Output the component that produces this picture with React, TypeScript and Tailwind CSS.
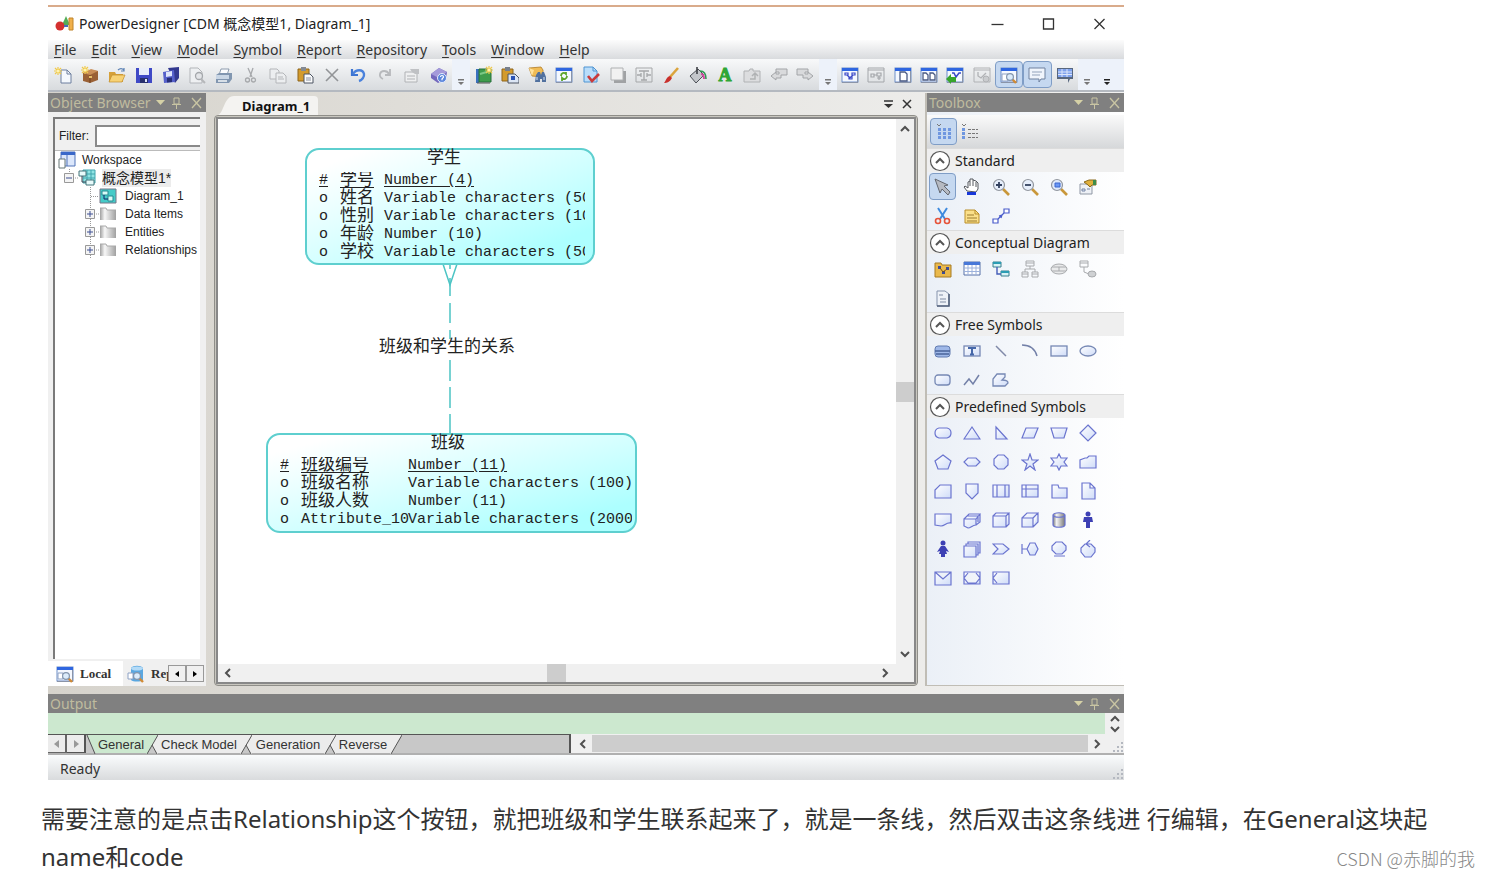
import React from 'react';

interface Tool {
    name: string;
    icon: React.ReactNode;
    active?: boolean;
}

interface Attribute {
    key?: boolean;
    name: string;
    type: string;
}

const uiFont = "font-['Noto_Sans','Noto_Sans_CJK_SC',sans-serif]";
const arial = "font-['Liberation_Sans','Noto_Sans_CJK_SC',sans-serif]";
const mono = "font-['Liberation_Mono','Noto_Sans_CJK_SC',monospace]";

const Icon: React.FC<{ children: React.ReactNode }> = ({ children }) => (
    <svg viewBox="0 0 18 18" className="h-[18px] w-[18px] shrink-0" fill="none" aria-hidden="true">
        {children}
    </svg>
);

// Pieces reused by several icons
const Spark = ({ x = 3, y = 4 }: { x?: number; y?: number }) => (
    <g transform={`translate(${x} ${y})`}>
        <path d="M0-4V4M-4 0H4M-3-3L3 3M3-3L-3 3" stroke="#f0c94a" strokeWidth="1.2" />
        <circle r="1.6" fill="#fff3b0" />
    </g>
);

const Lens = ({ x = 10, y = 10 }: { x?: number; y?: number }) => (
    <g>
        <path d={`M${x + 2} ${y + 2}l4 4`} stroke="#d18a34" strokeWidth="2.4" />
        <circle cx={x} cy={y} r="3.4" fill="#dcecfb" stroke="#8395ad" strokeWidth="1.2" />
    </g>
);

const BlueWindow = () => (
    <g>
        <rect x="1" y="2" width="16" height="14" fill="#f4f8ff" stroke="#6f8fc8" />
        <path d="M1 2h16v3H1z" fill="#2f66e0" />
        <path d="M1 16.5h16M16.5 5v11" stroke="#8a94a8" />
    </g>
);

const fileTools: Tool[] = [
    { name: 'New', icon: <><path d="M7 4h6l4 4v9H7z" fill="#f4f8fd" stroke="#6c7f9e" /><path d="M13 4v4h4" stroke="#6c7f9e" /><Spark x={4} y={5} /></> },
    { name: 'New project', icon: <><path d="M2 7l7-3 8 1v9l-8 3-7-2z" fill="#9a6136" /><path d="M2 7l7 2 8-4-7-2z" fill="#c98e59" /><path d="M9 9v8" stroke="#70401f" /><path d="M8 10h3v2H8z" fill="#e8c06a" /><Spark x={4} y={4} /></> },
    { name: 'Open', icon: <><path d="M1 6h6l1 2h7v8H1z" fill="#d6a13a" /><path d="M4 9h13l-3 7H1z" fill="#f7d275" stroke="#c08c2c" strokeWidth=".7" /><path d="M10 4c2-2 4-2 6 0m0-2v3h-3" stroke="#5c82b5" strokeWidth="1.2" /></> },
    { name: 'Save', icon: <><path d="M1 2h16v15H1z" fill="#3f49c6" /><path d="M4 2h10v7H4z" fill="#e9eefb" /><path d="M5 12h8v5H5z" fill="#28306e" /><path d="M10 13h2v3h-2z" fill="#dfe4f7" /></> },
    { name: 'Save all', icon: <><path d="M6 2l11-1v11l-4 5z" fill="#33398f" /><path d="M1 6l11-2 1 12-11 1z" fill="#5560ca" /><path d="M4 6l6-1v5l-6 1z" fill="#dfe5fa" /><path d="M5 12l5-.5V16l-5 .5z" fill="#282f78" /></> },
    { name: 'Print preview', icon: <><path d="M2 2h8l4 4v11H2z" fill="#eef0f2" stroke="#b2b5b9" /><circle cx="11" cy="10" r="3.5" fill="#e3e5e8" stroke="#a4a7ab" strokeWidth="1.3" /><path d="M13 13l4 4" stroke="#b5b7ba" strokeWidth="2" /></> },
    { name: 'Print', icon: <><path d="M6 3h8l-2 6H4z" fill="#fbfcfe" stroke="#73869c" strokeWidth=".8" /><path d="M1 9l3-2h13v6l-3 4H1z" fill="#8196b0" /><path d="M1 9h13v4H1z" fill="#c9d6e5" /><path d="M3 15h9" stroke="#f4f7fa" strokeWidth="1.5" /></> },
    { name: 'Cut', icon: <g stroke="#a7a9ac" strokeWidth="1.3"><path d="M6 2l4 9M11 2L8 11" /><circle cx="5.5" cy="14" r="2" /><circle cx="11.5" cy="14" r="2" /></g> },
    { name: 'Copy', icon: <g fill="#eceef0" stroke="#b4b6b9"><path d="M1 3h7l2 2v8H1z" /><path d="M7 7h7l3 3v7H7z" /><path d="M9 11h5M9 13h6" /></g> },
    { name: 'Paste', icon: <><path d="M2 3h11v12H2z" fill="#d39b2c" stroke="#8e651b" /><path d="M5 1h5v4H5z" fill="#848a93" /><path d="M8 8h6l3 3v6H8z" fill="#fbfbfb" stroke="#4d5563" /><path d="M10 12h5M10 14h5" stroke="#8a93a3" /></> },
    { name: 'Delete', icon: <path d="M3 3l12 12M15 3L3 15" stroke="#929497" strokeWidth="1.6" /> },
    { name: 'Undo', icon: <><path d="M3 3v6h6" stroke="#3c74d2" strokeWidth="2.2" /><path d="M4 8c3-5 10-5 11 0 .5 3-2 6-5 7" stroke="#4a82dc" strokeWidth="2.4" /></> },
    { name: 'Redo', icon: <g stroke="#b7b9bc" strokeWidth="1.8"><path d="M14 3v6H9" /><path d="M13 8c-2-4-8-4-9 0-.5 2 1 4 3 5" /></g> },
    { name: 'Properties', icon: <><path d="M2 6h12v10H2z" fill="#eeeff0" stroke="#b0b2b5" /><path d="M7 3h9v5h-4L9 6z" fill="#bfc1c4" /><path d="M4 10h8M4 13h8" stroke="#b0b2b5" /></> },
    { name: 'Help topics', icon: <><path d="M1 8l8-6 8 4-1 7-8 4-7-5z" fill="#7468bd" /><path d="M1 8l8-6 8 4-8 6z" fill="#a49ada" /><circle cx="12" cy="12" r="4.5" fill="#5b86dc" stroke="#e7edfb" /><path d="M10.5 11c0-2 3-2 3 0 0 1-1.5 1-1.5 2.2v1" stroke="#fff" strokeWidth="1.2" /></> },
];

const viewTools: Tool[] = [
    { name: 'New diagram', icon: <><path d="M1 3h3v14H1z" fill="#3b70bd" /><path d="M4 3h12v13H4z" fill="#3f9c4c" stroke="#27713a" /><path d="M2 17h13" stroke="#555" /><path d="M5 8l10-3" stroke="#7cc886" strokeWidth="2" /><Spark x={14} y={4} /></> },
    { name: 'Paste as shortcut', icon: <><path d="M1 3h11v12H1z" fill="#d39b2c" stroke="#8e651b" /><path d="M4 1h5v4H4z" fill="#777f8b" /><path d="M7 8h7l4 4v5H7z" fill="#dce6f5" stroke="#4d5563" /><path d="M10 10h4v4h-4z" fill="#2b54b5" /></> },
    { name: 'Find', icon: <><path d="M1 2l12-1 2 3v7L4 10z" fill="#f0bc56" stroke="#b17b24" strokeWidth=".8" /><path d="M1 2l3 8 2-6z" fill="#ffe19a" /><path d="M8 9l2-3h2l1 3 1-3h2l2 5v5h-4v-3h-2v3H7z" fill="#51719f" /><path d="M9 14v-3M16 14v-3" stroke="#dae6f6" /></> },
    { name: 'Refresh', icon: <><BlueWindow /><path d="M6 10c0-3 3-4 5-2V6M12 10c0 3-3 4-5 2v3" stroke="#5da52c" strokeWidth="1.8" /></> },
    { name: 'Check model', icon: <><path d="M2 1h9l4 4v11H2z" fill="#b9ddfa" stroke="#4f94d2" /><path d="M11 1v4h4" stroke="#4f94d2" /><path d="M6 10l4 5 7-7" stroke="#c93b3b" strokeWidth="2.6" /></> },
    { name: 'Shadow', icon: <><path d="M5 5h12v12H5z" fill="#a0a2a4" /><path d="M2 2h12v12H2z" fill="#f1f1f1" stroke="#aeb0b2" /></> },
    { name: 'Text zone', icon: <g stroke="#a5a7a9"><path d="M1 2h16v14H1z" /><path d="M4 5h10M9 5v9M6 14h6M2 9h4M12 9h4M6 7v4M12 7v4" strokeWidth="1.3" /></g> },
    { name: 'Line style', icon: <><path d="M16 2l-8 9" stroke="#dba43c" strokeWidth="2.6" /><path d="M8 10l2 2c-2 4-5 5-8 5 2-2 2-6 6-7z" fill="#c9302c" /></> },
    { name: 'Fill', icon: <><path d="M1 10l8-7 6 6-8 8z" fill="#c3c6ca" stroke="#4b4f55" /><path d="M8 1v7" stroke="#3c3f44" strokeWidth="1.6" /><path d="M11 5c4 0 6 3 6 8" stroke="#2f9a54" strokeWidth="1.6" /><path d="M12 8c2 0 3 2 3 5" stroke="#d14ba0" strokeWidth="2" /></> },
    { name: 'Font', icon: <text x="9" y="15" textAnchor="middle" fill="#2fa634" stroke="#2fa634" fontSize="18" fontWeight="700" fontFamily="Liberation Serif">A</text> },
    { name: 'Go up', icon: <g fill="#dcdddf" stroke="#b0b2b4"><path d="M1 5h5l1-2h3v2h7v11H1z" /><path d="M7 13h5V8m-3 2l3-3 3 3" strokeWidth="1.5" /></g> },
    { name: 'Previous view', icon: <path d="M6 6h11v6h-6v3l-1 0-4 0v2l-5-4 5-4v2h3V9H6z" transform="translate(0 -3)" fill="#d9dadc" stroke="#a3a5a8" /> },
    { name: 'Next view', icon: <path d="M12 6H1v6h6v3h5v2l5-4-5-4v2H9V9h3z" transform="translate(0 -3)" fill="#d9dadc" stroke="#a3a5a8" /> },
];

const windowTools: Tool[] = [
    { name: 'Diagram window', icon: <><BlueWindow /><path d="M4 7h3v2H4zM11 7h3v2h-3zM8 11h3v2H8zM6 9l3 3 3-3" stroke="#3a49c8" strokeWidth="1.2" /></> },
    { name: 'Grid window', icon: <g stroke="#a3a6aa"><path d="M1 2h16v14H1zM1 4h16" /><path d="M4 8h3v3H4zM10 7h4v3h-4zM10 12h4M7 9h3M12 10v4" strokeWidth="1.2" /></g> },
    { name: 'Page window', icon: <><BlueWindow /><path d="M6 6h5l2 2v7H6z" fill="#fff" stroke="#4a5a83" strokeWidth="1.3" /></> },
    { name: 'Pages window', icon: <><BlueWindow /><path d="M3 7h3l2 2v5H3zM10 7h3l2 2v5h-5z" fill="#fff" stroke="#4a5a83" strokeWidth="1.3" /></> },
    { name: 'Show symbols', icon: <><BlueWindow /><path d="M6 7h2l2 4 3-4h2" stroke="#3a49c8" strokeWidth="1.5" /><path d="M0 13l5-5v3h5v5H5v2z" fill="#37a52c" /></> },
    { name: 'Hide symbols', icon: <g stroke="#b0b2b5"><path d="M1 2h16v14H1zM1 4h16" /><path d="M5 6v4l3 2 5-5" strokeWidth="1.3" /><circle cx="13" cy="13" r="3" fill="#cacccf" /></g> },
    { name: 'Object Browser', active: true, icon: <><BlueWindow /><path d="M2 8h6v7H2z" fill="#fff" stroke="#8ea2c5" /><Lens x={10} y={11} /></> },
    { name: 'Output', active: true, icon: <><path d="M1 2h16v11h-4l-2 3v-3H1z" fill="#f0f5fc" stroke="#6f819f" /><path d="M4 6h10M4 9h8" stroke="#93a3bb" /></> },
    { name: 'Result list', icon: <><path d="M1 2h16v11h-3l-2 4v-4H1z" fill="#58677e" /><path d="M2 3h14v8H2z" fill="#7ea1ec" /><path d="M2 6h14M2 8.5h14M6 3v8M11 3v8" stroke="#dce6fb" /></> },
];

const standardTools: Tool[] = [
    { name: 'Pointer', active: true, icon: <path d="M1 1l13 6-4 1 6 6-2 3-6-6-2 4z" fill="#b6bac2" stroke="#63676f" /> },
    { name: 'Grabber', icon: <><path d="M4 13L1 9l1-1 3 2V4l2-1V1h3v1l3 1 2 2v6l-2 3z" fill="#fff" stroke="#55585e" /><path d="M7 3v5M10 2v6M13 4v5" stroke="#55585e" /><path d="M4 14h9v3H4z" fill="#1737d8" /></> },
    { name: 'Zoom in', icon: <><path d="M11 11l6 6" stroke="#c9973a" strokeWidth="2.6" /><circle cx="7" cy="7" r="5.5" fill="#e6eefb" stroke="#92979f" strokeWidth="1.2" /><path d="M4 7h6M7 4v6" stroke="#33415f" strokeWidth="1.8" /></> },
    { name: 'Zoom out', icon: <><path d="M11 11l6 6" stroke="#c9973a" strokeWidth="2.6" /><circle cx="7" cy="7" r="5.5" fill="#e6eefb" stroke="#92979f" strokeWidth="1.2" /><path d="M4 7h6" stroke="#33415f" strokeWidth="1.8" /></> },
    { name: 'Open diagram', icon: <><path d="M11 11l6 6" stroke="#c9973a" strokeWidth="2.6" /><circle cx="7" cy="7" r="5.5" fill="#dfe9fb" stroke="#92979f" strokeWidth="1.2" /><path d="M5 5h5v4H5z" fill="#6b97f4" stroke="#3b66ce" /></> },
    { name: 'Properties', icon: <><path d="M1 6h12v10H1z" fill="#eef1f6" stroke="#8f97a4" /><path d="M3 11h3v2H3zM8 11h3" stroke="#7284a6" /><path d="M5 4l5-2h7v5h-4l-2 2-2-2z" fill="#e0b03c" stroke="#8a6a1e" /><path d="M14 2h3v5h-3z" fill="#3e8c4a" /></> },
    { name: 'Delete', icon: <><path d="M4 1l7 11M13 1L6 12" stroke="#3f8ade" strokeWidth="2" /><circle cx="4" cy="14" r="2.5" stroke="#e6533a" strokeWidth="1.6" /><circle cx="13" cy="14" r="2.5" stroke="#e6533a" strokeWidth="1.6" /></> },
    { name: 'Note', icon: <><path d="M2 3h10l4 4v9H2z" fill="#fbe08a" stroke="#b98e2b" /><path d="M12 3v4h4" stroke="#b98e2b" /><path d="M4 8h7M4 11h10M4 14h10" stroke="#9c7d31" /></> },
    { name: 'Link', icon: <g stroke="#4a5ccb" strokeWidth="1.2"><path d="M1 12h5v4H1zM12 2h5v4h-5z" fill="#fff" /><path d="M6 12l6-6M7 9l3-1-1 3" /></g> },
];

const conceptualTools: Tool[] = [
    { name: 'Package', icon: <><path d="M1 3h6l1 2h9v12H1z" fill="#eab94c" stroke="#a77a22" /><path d="M4 6h3v3H4zM12 7h3v3h-3zM8 11h3v3H8z" fill="#3c4c9c" /><path d="M6 8l3 4 4-3" stroke="#7b5413" /></> },
    { name: 'Entity', icon: <><path d="M1 2h16v13H1z" fill="#fff" stroke="#5671a8" /><path d="M1 2h16v3H1z" fill="#4878d8" /><path d="M1 8h16M1 11.5h16M5 5v10M9 5v10M13 5v10" stroke="#9db2dc" /></> },
    { name: 'Relationship', icon: <><path d="M1 2h8v5H1zM9 11h8v5H9z" fill="#d8f3f6" stroke="#397e8e" /><path d="M1 2h8v2H1zM9 11h8v2H9z" fill="#2b9db4" /><path d="M5 7v7h4" stroke="#445db8" strokeWidth="1.4" /></> },
    { name: 'Inheritance', icon: <g stroke="#a8aaad"><path d="M5 1h8v5H5zM1 12h6v5H1zM11 12h6v5h-6zM9 6v3M4 12V9h10v3" /><path d="M5 3h8M1 14h6M11 14h6" /></g> },
    { name: 'Association', icon: <g stroke="#a8aaad"><ellipse cx="9" cy="9" rx="8" ry="5" fill="#e9eaeb" /><path d="M2 7h14M2 11h14M9 7v4" /></g> },
    { name: 'Association link', icon: <g stroke="#a8aaad"><path d="M1 1h8v6H1zM1 3h8M5 7v5l5 2" /><ellipse cx="13" cy="14" rx="4" ry="3" fill="#cfd1d3" /></g> },
    { name: 'File', icon: <><path d="M3 2h8l4 3v12H3z" fill="#eef2f8" stroke="#8593ac" /><path d="M15 5v12H3" stroke="#54637d" strokeWidth="1.6" /><path d="M5 6h4M6 10h6M6 13h6" stroke="#7e8ba3" /></> },
];

const slate = { stroke: '#7688b4', strokeWidth: 1.3, fill: 'url(#shapeFill)' };
const violet = { stroke: '#6a74cf', strokeWidth: 1.2, fill: 'url(#shapeFill)' };

const freeTools: Tool[] = [
    { name: 'Title', icon: <><rect x="1" y="4" width="15" height="11" rx="3" fill="#9fb8e8" stroke="#617bb0" /><path d="M1 9h15M2 12h13" stroke="#4a6399" strokeWidth="1.3" /></> },
    { name: 'Text', icon: <><rect x="1" y="4" width="16" height="10" {...slate} /><path d="M5 6h8M9 6v7M7 12.5h4" stroke="#4567a9" strokeWidth="2" /></> },
    { name: 'Line', icon: <path d="M4 4l10 10" stroke="#8089a8" strokeWidth="1.5" /> },
    { name: 'Arc', icon: <path d="M1 3c8 0 13 4 15 11" stroke="#7380a8" strokeWidth="1.5" /> },
    { name: 'Rectangle', icon: <rect x="1" y="4" width="16" height="10" {...slate} /> },
    { name: 'Ellipse', icon: <ellipse cx="9" cy="9" rx="8" ry="5" {...slate} /> },
    { name: 'Rounded rectangle', icon: <rect x="1" y="4" width="15" height="10" rx="3" {...slate} /> },
    { name: 'Polyline', icon: <path d="M1 14l5-6 4 5 6-9" stroke="#7380a8" strokeWidth="1.5" /> },
    { name: 'Polygon', icon: <path d="M1 15V8l4-5h8v3l-3 3c3 0 6 1 6 3l-3 3z" {...slate} /> },
];

const shapePaths: [string, string][] = [
    ['Rounded', 'M5 4h8q4 1 4 5t-4 5H5q-4-1-4-5t4-5z'],
    ['Triangle', 'M9 3l8 12H1z'],
    ['Right triangle', 'M4 3l11 12H4z'],
    ['Parallelogram', 'M5 4h12l-4 10H1z'],
    ['Trapezoid', 'M1 4h16l-3 10H4z'],
    ['Diamond', 'M9 1l8 8-8 8-8-8z'],
    ['Pentagon', 'M9 2l8 6-3 8H4L1 8z'],
    ['Hexagon', 'M5 5h8l4 4-4 4H5L1 9z'],
    ['Octagon', 'M6 2h6l4 4v6l-4 4H6l-4-4V6z'],
    ['Five point star', 'M9 1l2 6h6l-5 4 2 6-5-4-5 4 2-6-5-4h6z'],
    ['Six point star', 'M9 1l2 4h6l-3 4 3 4h-6l-2 4-2-4H1l3-4-3-4h6z'],
    ['Manual input', 'M1 15V7l5-2h2l2-2h7v12z'],
    ['Card', 'M1 16V8l5-5h11v13z'],
    ['Off page', 'M3 2h12v9l-6 6-6-6z'],
    ['Predefined process', 'M1 3h16v12H1zM5 3v12M13 3v12'],
    ['Internal storage', 'M1 3h16v12H1zM5 3v12M1 7h16'],
    ['Folder', 'M2 6V3h6l1 3h8v10H2z'],
    ['Page', 'M3 1h8l5 5v11H3zM11 1v5h5'],
    ['Document', 'M1 3h16v9c-5-1-6 3-10 3l-6-1z'],
    ['Documents', 'M1 8h12v6c-4 0-5 3-8 3l-4-2zM1 8l5-5h11l-4 5M17 3v8l-4 3M4 5h11v6'],
    ['Box', 'M1 5h13v11H1zM1 5l3-3h13l-3 3M17 2v11l-3 3'],
    ['Cube', 'M1 7h11v9H1zM1 7l5-5h11l-5 5M17 2v9l-5 5'],
    ['Cylinder', 'M3 4v10c1 3 11 3 12 0V4c-1-3-11-3-12 0zM3 4c1 3 11 3 12 0'],
    ['Man', 'M5 6h8l1 5h-3v6H7v-6H4z'],
    ['Woman', 'M7 6h4l4 6-3-1 1 3h-2v3H7v-3H5l1-3-3 1z'],
    ['Stack', 'M1 6h12v11H1zM3 6V4h12v11h-2M5 4V2h12v11h-2'],
    ['Chevron', 'M1 4h10l6 5-6 5H1l5-5z'],
    ['Boundary', 'M1 4v10M1 9h5M6 9l3-6h5l3 6-3 6H9z'],
    ['Entity circle', 'M6 2h6l4 4v4l-4 4H6l-4-4V6zM4 16h11'],
    ['Control', 'M6 4h6l4 4v4l-4 5H6l-4-5V8zM11 0L7 4l4 3'],
    ['Envelope', 'M1 3h16v13H1zM1 3l8 7 8-7'],
    ['Frame', 'M1 3h16v12H1zM5 4l-4 5 4 5h8l4-5-4-5'],
    ['Cut card', 'M1 3h16v12H1zM5 4L1 9l4 5'],
];

const solidShapes = ['Man', 'Woman'];

const shapeTools: Tool[] = shapePaths.map(([name, d]) => ({
    name,
    icon: solidShapes.includes(name) ? (
        <g fill="#3d40b4"><circle cx="9" cy="3" r="2.5" /><path d={d} /></g>
    ) : (
        <path d={d} {...violet} fill={name === 'Cylinder' ? 'url(#metalFill)' : violet.fill} />
    ),
}));

const toolboxSections = [
    { title: 'Standard', tools: standardTools },
    { title: 'Conceptual Diagram', tools: conceptualTools },
    { title: 'Free Symbols', tools: freeTools },
    { title: 'Predefined Symbols', tools: shapeTools },
];

const menus = ['File', 'Edit', 'View', 'Model', 'Symbol', 'Report', 'Repository', 'Tools', 'Window', 'Help'];

const ToolButton: React.FC<{ tool: Tool; className?: string }> = ({ tool, className = '' }) => (
    <button
        type="button"
        aria-label={tool.name}
        className={`flex items-center justify-center rounded-sm ${tool.active ? 'border border-[#7f9dc6] bg-[#c5d8f0]' : ''} ${className}`}
    >
        <Icon>{tool.icon}</Icon>
    </button>
);

const Overflow = ({ dark = false }: { dark?: boolean }) => (
    <button type="button" aria-label="Toolbar options" className="flex w-[18px] shrink-0 items-end justify-center bg-[#edf2fa] pb-1">
        <svg viewBox="0 0 6 7" className="h-[7px] w-[6px]" fill={dark ? '#222' : '#777'}>
            <path d="M0 0h6v1.500H0zM0 3h6L3 6z" />
        </svg>
    </button>
);

const Chevron: React.FC<{ dir: 'up' | 'down' | 'left' | 'right' }> = ({ dir }) => {
    const paths = { up: 'M1 7l4-4 4 4', down: 'M1 3l4 4 4-4', left: 'M7 1L3 5l4 4', right: 'M3 1l4 4-4 4' };
    return (
        <svg viewBox="0 0 10 10" className="h-[10px] w-[10px]" fill="none" stroke="#505050" strokeWidth="2">
            <path d={paths[dir]} />
        </svg>
    );
};

const PanelHeader: React.FC<{ title: string }> = ({ title }) => (
    <div className="flex h-[19px] items-center bg-[#808080] px-[2px] text-[14px] leading-[19px] text-[#bfbb9e]">
        <span className="grow whitespace-nowrap">{title}</span>
        <svg viewBox="0 0 50 12" className="h-3 w-[50px] shrink-0" fill="none" stroke="#c9c5a3">
            <path d="M2 3h9L6.500 8z" fill="#d5d1a6" stroke="none" />
            <path d="M20 1h5v6h-5zM18 7.500h9M22.500 8v4" />
            <path d="M38 1l9 10M47 1l-9 10" strokeWidth="1.3" />
        </svg>
    </div>
);

const AppLogo = () => (
    <svg viewBox="0 0 20 18" className="h-[18px] w-5" aria-hidden="true">
        <defs>
            <linearGradient id="shapeFill" x1="0" y1="0" x2="1" y2="1">
                <stop offset="0" stopColor="#fff" />
                <stop offset="1" stopColor="#cfdcf8" />
            </linearGradient>
            <linearGradient id="metalFill">
                <stop offset="0" stopColor="#777" />
                <stop offset=".3" stopColor="#f4f4f4" />
                <stop offset="1" stopColor="#777" />
            </linearGradient>
        </defs>
        <path d="M11 1l4 9H7z" fill="#54ad58" />
        <path d="M14 3h4v12h-4z" fill="#f0b04b" stroke="#c0842b" />
        <circle cx="5" cy="11" r="4.5" fill="#d4302f" />
        <path d="M9 11h4" stroke="#4869b8" strokeWidth="2" />
    </svg>
);

const Expander = ({ open = false }: { open?: boolean }) => (
    <svg viewBox="0 0 18 18" className="h-[18px] w-[18px] shrink-0" fill="none">
        <path d="M13 9h5" stroke="#999" strokeDasharray="1 1" />
        <path d={open ? 'M9.500 0v4' : 'M9.500 0v4M9.500 14v4'} stroke="#999" strokeDasharray="1 1" />
        <path d="M4.500 4.500h9v9h-9z" fill="#f4f4f4" stroke="#999" />
        <path d={open ? 'M6 9h6' : 'M6 9h6M9 6v6'} stroke="#3c4f92" />
    </svg>
);

const FolderIcon = () => (
    <Icon>
        <path d="M1 3h6l1 2h9v10H1z" fill="url(#metalFill)" opacity=".7" />
        <path d="M1 3h6l1 2h9" stroke="#aaa" />
    </Icon>
);

const ObjectBrowser = () => (
    <section className="flex w-[158px] shrink-0 flex-col bg-[#f0f0f0]">
        <PanelHeader title="Object Browser" />
        <div className={`mt-[5px] mr-[6px] ml-[5px] flex grow flex-col border-t-2 border-l-2 border-[#7a7a7a] bg-white ${arial} text-[12px] text-[#222]`}>
            <div className="flex h-8 items-center gap-[6px] border-b border-[#bbb] bg-[#f0f0f0] pt-[3px] pl-1">
                <label htmlFor="filter">Filter:</label>
                <input id="filter" type="text" className="h-[22px] w-0 grow border-2 border-r-0 border-[#8a8a8a] bg-white outline-none" />
            </div>
            <ul className="leading-[18px] whitespace-nowrap">
                <li className="flex gap-[6px] pl-[3px]">
                    <Icon>
                        <path d="M3 1h14v14H3z" fill="#dce7fb" stroke="#5374b8" />
                        <path d="M3 1h14v3H3z" fill="#3a68c9" />
                        <path d="M9 4v11" stroke="#5374b8" />
                        <path d="M1 8h6v9H1z" fill="#fff" stroke="#677" />
                    </Icon>
                    Workspace
                </li>
                <li className="flex pl-[5px]">
                    <Expander open />
                    <Icon>
                        <path d="M5 1h12v13H5z" fill="#8fe3e3" stroke="#41a5ad" />
                        <path d="M9 1v13M13 1v13M5 5h12M5 9h12" stroke="#41a5ad" />
                        <path d="M1 2h7v5H1zM8 11h8v5H8z" fill="#e8fbfb" stroke="#44747a" />
                        <path d="M4 7v6h4" stroke="#445" />
                    </Icon>
                    <span className="ml-[6px] bg-[#ececec] text-[14px]">概念模型1*</span>
                </li>
                <li className="flex pl-[26px]">
                    <svg viewBox="0 0 18 18" className="h-[18px] w-[18px]"><path d="M9.500 0v18M10 9.500h8" stroke="#999" strokeDasharray="1 1" /></svg>
                    <Icon>
                        <path d="M1 2h16v14H1z" fill="#45cbc8" stroke="#778" />
                        <path d="M3 4h6v4H3zM9 9h5v5H9z" fill="#d9fbf7" stroke="#278a91" />
                        <path d="M5 8v4h4" stroke="#126" />
                    </Icon>
                    <span className="ml-[8px]">Diagram_1</span>
                </li>
                {['Data Items', 'Entities', 'Relationships'].map((item) => (
                    <li key={item} className="flex pl-[26px]">
                        <Expander />
                        <FolderIcon />
                        <span className="ml-[8px]">{item}</span>
                    </li>
                ))}
            </ul>
        </div>
        <div className="mt-[2px] flex h-[25px] items-stretch font-['Liberation_Serif',serif] text-[13px] font-bold text-[#333]">
            <button type="button" className="flex w-[75px] items-center gap-[6px] bg-white pl-2">
                <Icon><BlueWindow /><path d="M2 8h5v6H2z" fill="#fff" stroke="#8ea2c5" /><Lens x={10} y={11} /></Icon>
                Local
            </button>
            <button type="button" className="flex w-0 grow items-center gap-[6px] overflow-hidden pl-1">
                <Icon><path d="M4 3v12c2 2 10 2 12 0V3c-2-3-10-3-12 0z" fill="#5aa7e0" /><ellipse cx="10" cy="3.5" rx="6" ry="2" fill="#b4dbf7" /><path d="M1 8h5v6H1z" fill="#fff" stroke="#8ea2c5" /><Lens x={10} y={11} /></Icon>
                Rep
            </button>
            <div className="my-1 mr-[2px] flex w-9 text-[#111]">
                <button type="button" aria-label="Scroll tabs left" className="flex w-[18px] items-center justify-center border border-[#999] bg-[#f0f0f0]">
                    <svg viewBox="0 0 6 6" className="h-[6px] w-[6px]"><path d="M5 0v6L1 3z" /></svg>
                </button>
                <button type="button" aria-label="Scroll tabs right" className="flex w-[18px] items-center justify-center border border-[#999] bg-[#f0f0f0]">
                    <svg viewBox="0 0 6 6" className="h-[6px] w-[6px]"><path d="M1 0v6l4-3z" /></svg>
                </button>
            </div>
        </div>
    </section>
);

const studentAttributes: Attribute[] = [
    { key: true, name: '学号', type: 'Number (4)' },
    { name: '姓名', type: 'Variable characters (50)' },
    { name: '性别', type: 'Variable characters (10)' },
    { name: '年龄', type: 'Number (10)' },
    { name: '学校', type: 'Variable characters (50)' },
];

const classAttributes: Attribute[] = [
    { key: true, name: '班级编号', type: 'Number (11)' },
    { name: '班级名称', type: 'Variable characters (100)' },
    { name: '班级人数', type: 'Number (11)' },
    { name: 'Attribute_10', type: 'Variable characters (2000)' },
];

const Entity: React.FC<{ title: string; attributes: Attribute[]; place: string; columns: string }> = ({ title, attributes, place, columns }) => (
    <div className={`absolute rounded-[14px] border-2 border-[#5ecfcf] bg-linear-to-br from-white from-10% to-[#adffff] to-85% pl-3 leading-[18px] text-[#222] ${mono} ${place}`}>
        <div className="mb-1 pr-4 text-center text-[17px] leading-[18px]">{title}</div>
        <div className="overflow-hidden">
            {attributes.map((a) => (
                <div key={a.name} className={`grid h-[18px] text-[15px] whitespace-nowrap ${columns} ${a.key ? 'underline underline-offset-2' : ''}`}>
                    <span>{a.key ? '#' : 'o'}</span>
                    <span className={a.name.startsWith('Attribute') ? '' : 'text-[17px]'}>{a.name}</span>
                    <span>{a.type}</span>
                </div>
            ))}
        </div>
    </div>
);

const DiagramEditor = () => (
    <section className="flex min-w-0 grow flex-col">
        <div className="flex h-[22px] items-end pr-[5px]">
            <svg viewBox="0 0 20 19" className="h-[19px] w-5"><path d="M4 19C10 17 10 0 20 0v19z" fill="#f4f3f1" /></svg>
            <button type="button" className="h-[19px] rounded-tr bg-[#f4f3f1] px-2 text-[13px] leading-[18px] font-bold text-[#111]">Diagram_1</button>
            <div className="grow" />
            <svg viewBox="0 0 30 12" className="mb-[5px] h-3 w-[30px]" fill="none" stroke="#333" strokeWidth="1.5">
                <path d="M1 3h9" /><path d="M1 6h9l-4.500 4z" fill="#333" stroke="none" /><path d="M20 2l8 8M28 2l-8 8" />
            </svg>
        </div>
        <div className="flex grow flex-col rounded border border-[#8f8e89] bg-[#c9c7bf] p-px">
            <div className="flex grow flex-col border-2 border-[#888]">
                <div className="flex grow">
                    <div className="relative min-h-[545px] min-w-0 grow overflow-hidden bg-white">
                        <svg viewBox="0 0 20 170" className="absolute top-[145px] left-[222px] h-[170px] w-5" fill="none" stroke="#4cc4c4" strokeWidth="1.5">
                            <path d="M3 0l7 21 7-21" />
                            <path d="M10 0v5M10 14v18M10 39v20M10 66v20M10 96v21M10 123v21M10 150v20" />
                        </svg>
                        <Entity
                            title="学生"
                            attributes={studentAttributes}
                            place="top-[29px] left-[87px] h-[117px] w-[290px] pr-2"
                            columns="grid-cols-[21px_44px_1fr]"
                        />
                        <div className={`absolute top-[220px] left-[161px] bg-white text-[17px] leading-[18px] text-[#222] ${mono}`}>班级和学生的关系</div>
                        <Entity
                            title="班级"
                            attributes={classAttributes}
                            place="top-[314px] left-[48px] h-[100px] w-[371px] pr-[3px]"
                            columns="grid-cols-[21px_107px_1fr]"
                        />
                    </div>
                    <div className="flex w-[18px] shrink-0 flex-col items-center justify-between bg-[#f0f0f0] py-[5px]">
                        <Chevron dir="up" />
                        <div className="h-5 w-[18px] bg-[#cdcdcd]" />
                        <Chevron dir="down" />
                    </div>
                </div>
                <div className="flex h-[18px] items-center justify-between bg-[#f0f0f0] pr-6 pl-[5px]">
                    <Chevron dir="left" />
                    <div className="h-[18px] w-[19px] bg-[#cdcdcd]" />
                    <Chevron dir="right" />
                </div>
            </div>
        </div>
    </section>
);

const Toolbox = () => (
    <section className="flex w-[199px] shrink-0 flex-col border-b border-l-2 border-[#c0bdb5] bg-linear-to-r from-[#ebf0f7] to-white">
        <PanelHeader title="Toolbox" />
        <div className="mt-[3px] flex h-[33px] items-center gap-1 bg-linear-to-b from-[#fafafa] to-[#d6d8da] pl-[3px]">
            <button type="button" aria-label="Icon view" className="flex h-[27px] w-[27px] items-center justify-center rounded-sm border border-[#7f9dc6] bg-[#c5d8f0]">
                <Icon><path d="M3 5h3v3H3zM8 5h3v3H8zM13 5h3v3h-3zM3 9h3v3H3zM8 9h3v3H8zM13 9h3v3h-3zM3 13h3v3H3zM8 13h3v3H8zM13 13h3v3h-3z" fill="#6f97e0" /><path d="M2 1l2 2 2-2" stroke="#777" /></Icon>
            </button>
            <button type="button" aria-label="List view">
                <Icon><path d="M1 5h3v3H1zM1 9h3v3H1zM1 13h3v3H1z" fill="#6f97e0" /><path d="M7 6.500h10M7 10.500h10M7 14.500h10" stroke="#777" strokeDasharray="3 1" /><path d="M1 1l2 2 2-2" stroke="#777" /></Icon>
            </button>
        </div>
        {toolboxSections.map((section) => (
            <div key={section.title}>
                <button type="button" className="flex h-6 w-full items-center gap-1 border-t border-[#dcdcdc] bg-[#efefef] pl-[2px] text-[14px] whitespace-nowrap text-[#222]">
                    <svg viewBox="0 0 22 22" className="h-[22px] w-[22px]" fill="#fff" stroke="#555" strokeWidth="1.2">
                        <circle cx="11" cy="11" r="9.5" /><path d="M7 13l4-4 4 4" strokeWidth="2" fill="none" />
                    </svg>
                    {section.title}
                </button>
                <div className="grid auto-rows-[29px] grid-cols-[repeat(6,29px)] pl-px">
                    {section.tools.map((tool) => <ToolButton key={tool.name} tool={tool} className="m-px" />)}
                </div>
            </div>
        ))}
    </section>
);

// Slanted joint between two sheet tabs; left and right are the fills of the tabs it joins
const TabJoint: React.FC<{ left: string; right?: string }> = ({ left, right }) => (
    <svg viewBox="0 0 12 19" className="h-[19px] w-3 shrink-0" fill="none">
        <path d="M0 0h12L1 19H0z" fill={left} />
        {right && <path d="M12 0v19h-1L6 10z" fill={right} />}
        <path d={right ? 'M12 0L1 19M6 10l5 9' : 'M12 0L1 19'} stroke="#555" />
    </svg>
);

const Grip = () => (
    <svg viewBox="0 0 12 12" className="ml-[6px] h-3 w-3 self-end" fill="#b4b8c0">
        <path d="M9 1h2v2H9zM9 5h2v2H9zM9 9h2v2H9zM5 5h2v2H5zM5 9h2v2H5zM1 9h2v2H1z" />
    </svg>
);

const Output = () => (
    <section className="bg-[#f0f0f0]">
        <PanelHeader title="Output" />
        <div className="flex">
            <div className="h-[21px] grow bg-[#cce8cf]" />
            <div className="flex w-[19px] flex-col items-center justify-center">
                <Chevron dir="up" />
                <Chevron dir="down" />
            </div>
        </div>
        <div className={`flex h-[19px] ${arial} text-[13px] text-[#333]`}>
            <div className="flex w-0 flex-[525] items-stretch border-t border-r-2 border-[#555] bg-[#c8c8c8]">
                <button type="button" aria-label="Previous tab" className="flex w-[19px] items-center justify-center border-r-2 border-b border-[#666] bg-[#ececec]">
                    <svg viewBox="0 0 8 8" className="h-2 w-2" fill="#999"><path d="M6 0v8L1 4z" /></svg>
                </button>
                <button type="button" aria-label="Next tab" className="flex w-[19px] items-center justify-center border-r-2 border-b border-[#555] bg-[#ececec]">
                    <svg viewBox="0 0 8 8" className="h-2 w-2" fill="#999"><path d="M2 0v8l5-4z" /></svg>
                </button>
                <svg viewBox="0 0 10 19" className="h-[19px] w-[10px] shrink-0">
                    <path d="M1 0h9v19z" fill="#cce8cf" />
                    <path d="M1 0l8 19" stroke="#555" />
                </svg>
                <button type="button" className="w-[50px] bg-[#cce8cf]">General</button>
                <TabJoint left="#cce8cf" right="#ececec" />
                <button type="button" className="w-[82px] bg-[#ececec]">Check Model</button>
                <TabJoint left="#ececec" right="#ececec" />
                <button type="button" className="w-[72px] bg-[#ececec]">Generation</button>
                <TabJoint left="#ececec" right="#ececec" />
                <button type="button" className="w-[54px] bg-[#ececec]">Reverse</button>
                <TabJoint left="#ececec" />
            </div>
            <div className="flex w-0 flex-[551] items-center gap-1 pl-[7px]">
                <Chevron dir="left" />
                <div className="h-[17px] grow bg-[#cdcdcd]" />
                <Chevron dir="right" />
                <Grip />
            </div>
        </div>
    </section>
);

const PowerDesigner = () => (
    <div className={`mr-[366px] ml-12 border-t-2 border-[#d9ab8b] ${uiFont}`}>
        <header className="flex h-[33px] items-center pr-[18px] pl-[7px]">
            <AppLogo />
            <h1 className="ml-1 grow text-[14px] leading-[18px] text-[#222]">PowerDesigner [CDM 概念模型1, Diagram_1]</h1>
            <div className="flex gap-[38px]">
                {[['Minimize', 'M0 6.500h12'], ['Maximize', 'M1 1h10v10H1z'], ['Close', 'M1 1l10 10M11 1L1 11']].map(([name, d]) => (
                    <button key={name} type="button" aria-label={name}>
                        <svg viewBox="0 0 12 12" className="h-3 w-[13px]" fill="none" stroke="#333" strokeWidth="1.3"><path d={d} /></svg>
                    </button>
                ))}
            </div>
        </header>

        <nav className="flex h-[19px] items-center gap-[15px] bg-linear-to-b from-[#fcfcfc] to-[#d9dbde] pl-[6px] text-[14px] leading-[19px] text-[#333]">
            {menus.map((menu) => (
                <button key={menu} type="button">
                    <span className="underline underline-offset-2">{menu[0]}</span>{menu.slice(1)}
                </button>
            ))}
        </nav>

        <div className="flex h-[33px] items-stretch border-b-2 border-[#b4b9c0] bg-linear-to-b from-[#f8f9fa] to-[#d8dbde] pl-[2px]">
            <div className="flex w-0 flex-[15] items-center">
                {fileTools.map((tool) => <ToolButton key={tool.name} tool={tool} className="h-[27px] w-0 grow" />)}
            </div>
            <Overflow />
            <div className="flex w-0 flex-[13] items-center">
                {viewTools.map((tool) => <ToolButton key={tool.name} tool={tool} className="h-[27px] w-0 grow" />)}
            </div>
            <Overflow />
            <div className="flex w-0 flex-[9] items-center">
                {windowTools.map((tool) => <ToolButton key={tool.name} tool={tool} className="h-[27px] w-0 grow" />)}
            </div>
            <Overflow />
            <div className="flex w-7 bg-[#edf2fa] pl-[2px]"><Overflow dark /></div>
        </div>

        <div className="flex bg-linear-to-r from-[#d6d3cc] to-[#f2f2f1] pt-[1px] pb-2">
            <ObjectBrowser />
            <div className="w-2 shrink-0" />
            <DiagramEditor />
            <div className="w-[7px] shrink-0" />
            <Toolbox />
        </div>

        <Output />

        <footer className="flex h-[27px] items-center justify-between border-t-2 border-[#b0b0b0] bg-linear-to-b from-[#fafcfd] to-[#d9dbdd] pt-px pl-3 text-[14px] text-[#333]">
            Ready
            <Grip />
        </footer>
    </div>
);

const App = () => (
    <main className="bg-white pt-[5px]">
        <PowerDesigner />
        <div className="relative mt-5">
            <p className={`pr-10 pl-[41px] text-[24px] leading-[38px] text-[#333] ${uiFont}`}>
                需要注意的是点击Relationship这个按钮，就把班级和学生联系起来了，就是一条线，然后双击这条线进 行编辑，在General这块起name和code
            </p>
            <span className="absolute right-[15px] bottom-1 font-['Noto_Sans_CJK_SC',sans-serif] text-[18px] leading-[28px] font-light text-[#888]">
                CSDN @赤脚的我
            </span>
        </div>
    </main>
);

export default App;
